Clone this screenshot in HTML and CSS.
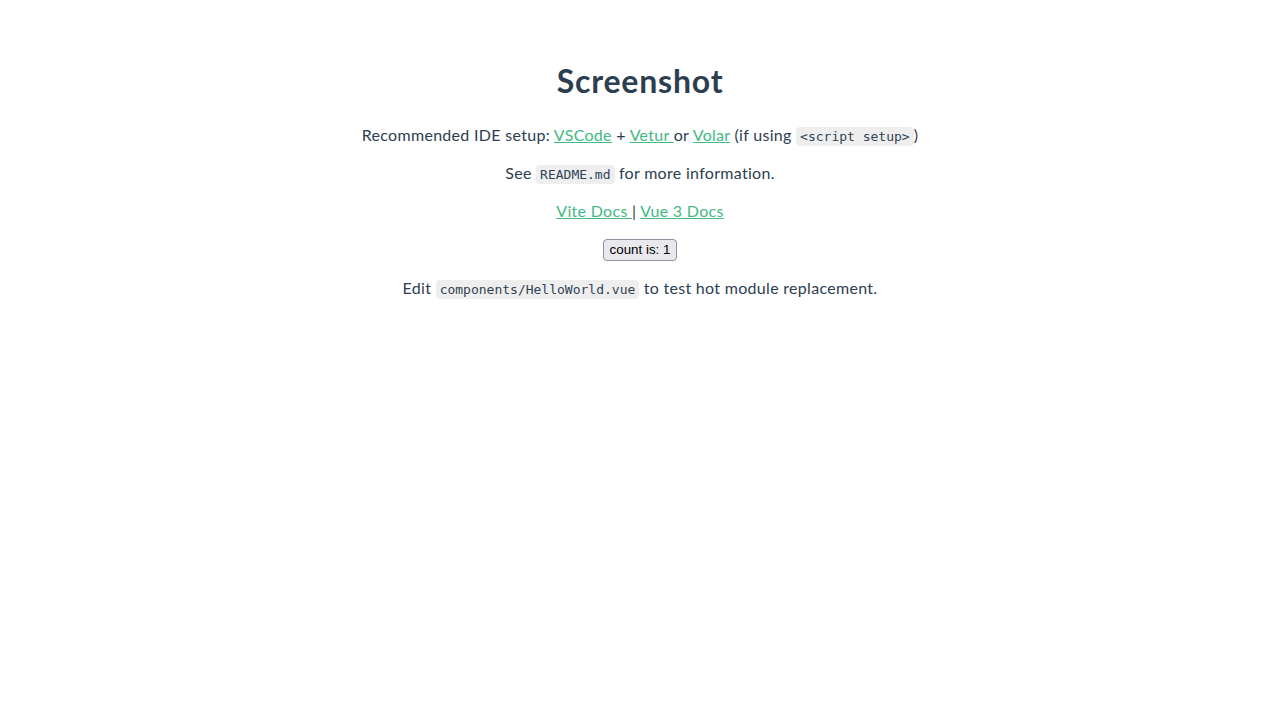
FILE: index.html
```html
<!DOCTYPE html>
<html lang="en">
<head>
<meta charset="utf-8">
<title>Screenshot</title>
<link rel="stylesheet" href="styles.css">
</head>
<body>
<div class="app">
  <h1 class="title">Screenshot</h1>
  <p class="line">Recommended IDE setup: <a class="link" href="#">VSCode</a> + <a class="link" href="#">Vetur </a>or <a class="link" href="#">Volar</a> (if using <code class="code">&lt;script setup&gt;</code>)</p>
  <p class="line">See <code class="code">README.md</code> for more information.</p>
  <p class="line"><a class="link" href="#">Vite Docs </a>| <a class="link" href="#">Vue 3 Docs</a></p>
  <button class="counter" type="button">count is: 1</button>
  <p class="line">Edit <code class="code">components/HelloWorld.vue</code> to test hot module replacement.</p>
</div>
</body>
</html>
```
FILE: styles.css
```css
html, body {
  background: #ffffff;
}
body {
  margin: 8px;
}
.app {
  font-family: Lato, "Noto Sans", Arial, sans-serif;
  -webkit-font-smoothing: antialiased;
  text-align: center;
  color: #2c3e50;
  margin-top: 51px;
}
.title {
  font-size: 32px;
  font-weight: 700;
  line-height: 44px;
  letter-spacing: 0.8px;
  margin: 21px 0;
}
.line {
  font-size: 16px;
  line-height: 22px;
  letter-spacing: 0.3px;
  margin: 16px 0;
}
.link {
  color: #42b983;
}
.code {
  font-family: "DejaVu Sans Mono", "Liberation Mono", monospace;
  font-size: 13px;
  line-height: 1;
  letter-spacing: 0;
  background-color: #eee;
  padding: 2px 4px;
  border-radius: 4px;
  color: #304455;
}
.counter {
  font-family: "Liberation Sans", Arial, sans-serif;
  font-size: 13.333px;
  line-height: 16px;
  color: #000;
  background: #e9e9ed;
  border: 1px solid #8f8f9d;
  border-radius: 4px;
  padding: 2px 5px;
  height: 22px;
  width: 74px;
}
```
